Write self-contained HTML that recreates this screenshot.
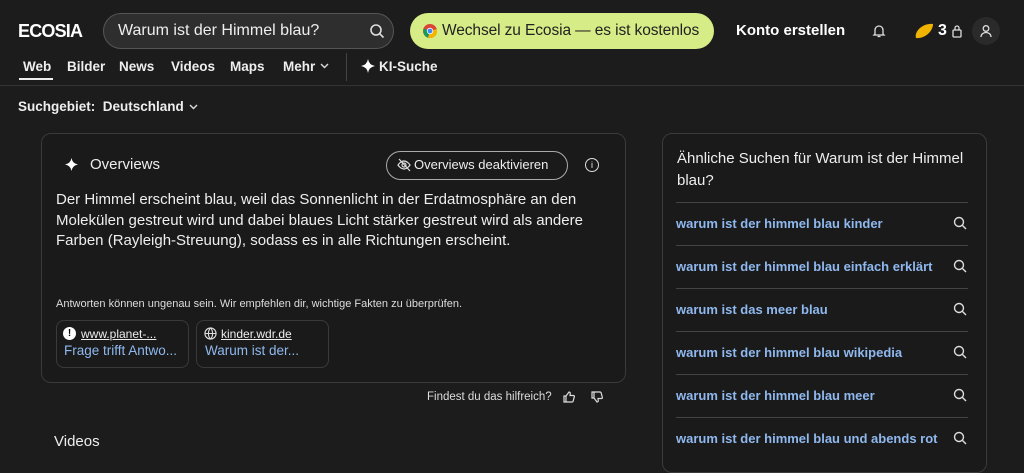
<!DOCTYPE html>
<html><head><meta charset="utf-8"><style>
*{box-sizing:border-box;margin:0;padding:0}
body{width:1024px;height:452px;overflow:hidden;background:#1c1c1c;color:#eee;font-family:"Liberation Sans",sans-serif;position:relative}
.a{position:absolute;white-space:nowrap}
.logo{left:18px;top:21px;font-weight:900;font-size:18px;letter-spacing:-0.8px;color:#fff}
.search{left:103px;top:13px;width:291px;height:36px;border:1px solid #555;border-radius:18px;background:#2e2e2e}
.green{left:410px;top:13px;width:304px;height:36px;border-radius:18px;background:#d6ec86;color:#222}
.nav{top:59px;font-size:13.5px;color:#eee;font-weight:bold}
.card{left:41px;top:133px;width:585px;height:250px;border:1px solid #3a3a3a;border-radius:10px;background:#1a1a1a}
.rc{left:662px;top:133px;width:325px;height:340px;border:1px solid #3a3a3a;border-radius:10px;background:#1a1a1a}
.rel{left:676px;width:292px;border-top:1px solid #444;height:43px;font-size:13px;font-weight:bold;color:#8fb8ef;padding-top:13px}
.src{top:320px;width:133px;height:48px;border:1px solid #3a3a3a;border-radius:8px}
</style></head><body>
<div class="a logo">ECOSIA</div>
<div class="a search"></div>
<div class="a" style="left:118px;top:22px;font-size:16px;color:#eee">Warum ist der Himmel blau?</div>
<svg class="a" style="left:369px;top:23px" width="16" height="16" viewBox="0 0 16 16" fill="none" stroke="#ddd" stroke-width="1.6"><circle cx="7" cy="7" r="5"/><path d="M11 11l3.5 3.5"/></svg>
<div class="a green"></div>
<svg class="a" style="left:423px;top:24px" width="14" height="14" viewBox="0 0 14 14"><circle cx="7" cy="7" r="7" fill="#db4437"/><path d="M7 7L1 4.5A7 7 0 0 0 5 13.7z" fill="#0f9d58"/><path d="M7 7l6.8-2A7 7 0 0 1 5 13.7z" fill="#f4b400"/><circle cx="7" cy="7" r="3.2" fill="#fff"/><circle cx="7" cy="7" r="2.4" fill="#4285f4"/></svg>
<div class="a" style="left:442px;top:22px;font-size:15.5px;color:#222;letter-spacing:-0.1px">Wechsel zu Ecosia — es ist kostenlos</div>
<div class="a" style="left:736px;top:22px;font-size:15px;color:#fff;font-weight:bold">Konto erstellen</div>
<svg class="a" style="left:872px;top:24px" width="14" height="14" viewBox="0 0 14 14" fill="none" stroke="#ddd" stroke-width="1.3"><path d="M3 10V6a4 4 0 0 1 8 0v4l1 1H2z M5.5 12.5h3"/></svg>
<svg class="a" style="left:914px;top:23px" width="20" height="16" viewBox="0 0 20 16"><path d="M2 15C0 9 8 0 19 1 19 8 11 16 2 15z" fill="#f0b400"/></svg>
<div class="a" style="left:938px;top:22px;font-size:16px;font-weight:bold;color:#fff">3</div>
<svg class="a" style="left:951px;top:24px" width="12" height="14" viewBox="0 0 12 14" fill="none" stroke="#ddd" stroke-width="1.3"><rect x="2" y="6" width="8" height="7" rx="1"/><path d="M4 6V4a2 2 0 0 1 4 0v2"/></svg>
<div class="a" style="left:972px;top:17px;width:28px;height:28px;border-radius:14px;background:#2a2a2a"></div>
<svg class="a" style="left:979px;top:24px" width="14" height="14" viewBox="0 0 14 14" fill="none" stroke="#ddd" stroke-width="1.3"><circle cx="7" cy="4.5" r="2.8"/><path d="M2 13c0-3 2.5-4.5 5-4.5s5 1.5 5 4.5"/></svg>
<div class="a nav" style="left:23px">Web</div>
<div class="a" style="left:19px;top:78px;width:34px;height:2px;background:#eee"></div>
<div class="a nav" style="left:67px">Bilder</div>
<div class="a nav" style="left:119px">News</div>
<div class="a nav" style="left:171px">Videos</div>
<div class="a nav" style="left:230px">Maps</div>
<div class="a nav" style="left:283px">Mehr</div>
<svg class="a" style="left:320px;top:63px" width="9" height="6" viewBox="0 0 9 6" fill="none" stroke="#ddd" stroke-width="1.4"><path d="M1 1l3.5 3.5L8 1"/></svg>
<div class="a" style="left:346px;top:53px;width:1px;height:28px;background:#444"></div>
<svg class="a" style="left:361px;top:59px" width="14" height="14" viewBox="0 0 14 14"><path d="M7 0Q8 6 14 7Q8 8 7 14Q6 8 0 7Q6 6 7 0z" fill="#fff"/></svg>
<div class="a nav" style="left:379px">KI-Suche</div>
<div class="a" style="left:0;top:85px;width:1024px;height:1px;background:#333"></div>
<div class="a" style="left:18px;top:99px;font-size:13.5px;font-weight:bold;color:#eee">Suchgebiet:&nbsp; Deutschland</div>
<svg class="a" style="left:189px;top:104px" width="9" height="6" viewBox="0 0 9 6" fill="none" stroke="#ddd" stroke-width="1.4"><path d="M1 1l3.5 3.5L8 1"/></svg>
<div class="a card"></div>
<svg class="a" style="left:65px;top:158px" width="13" height="13" viewBox="0 0 14 14"><path d="M7 0Q8 6 14 7Q8 8 7 14Q6 8 0 7Q6 6 7 0z" fill="#fff"/></svg>
<div class="a" style="left:90px;top:156px;font-size:15px;color:#eee">Overviews</div>
<div class="a" style="left:386px;top:151px;width:182px;height:29px;border:1px solid #aaa;border-radius:15px"></div>
<svg class="a" style="left:397px;top:158px" width="14" height="14" viewBox="0 0 14 14" fill="none" stroke="#ddd" stroke-width="1.2"><path d="M1 7s2.5-4 6-4 6 4 6 4-2.5 4-6 4-6-4-6-4z"/><circle cx="7" cy="7" r="2"/><path d="M2 1l11 12"/></svg>
<div class="a" style="left:414px;top:157px;font-size:13px;color:#eee">Overviews deaktivieren</div>
<div class="a" style="left:585px;top:158px;width:14px;height:14px;border:1.3px solid #ddd;border-radius:7px;font-size:9px;text-align:center;line-height:12px">i</div>
<div class="a" style="left:56px;top:190px;font-size:15px;line-height:20.5px;color:#eee;white-space:normal;width:560px">Der Himmel erscheint blau, weil das Sonnenlicht in der Erdatmosphäre an den Molekülen gestreut wird und dabei blaues Licht stärker gestreut wird als andere Farben (Rayleigh-Streuung), sodass es in alle Richtungen erscheint.</div>
<div class="a" style="left:56px;top:298px;font-size:11px;color:#ddd">Antworten können ungenau sein. Wir empfehlen dir, wichtige Fakten zu überprüfen.</div>
<div class="a src" style="left:56px"></div>
<div class="a src" style="left:196px"></div>
<div class="a" style="left:63px;top:327px;width:13px;height:13px;border-radius:7px;background:#fff;color:#000;font-size:10px;font-weight:bold;text-align:center;line-height:13px">!</div>
<div class="a" style="left:81px;top:327px;font-size:12px;color:#eee;text-decoration:underline">www.planet-...</div>
<div class="a" style="left:64px;top:343px;font-size:13.5px;color:#8fb8ef">Frage trifft Antwo...</div>
<svg class="a" style="left:204px;top:327px" width="13" height="13" viewBox="0 0 14 14" fill="none" stroke="#ddd" stroke-width="1.2"><circle cx="7" cy="7" r="6"/><path d="M1 7h12M7 1c-3 3-3 9 0 12M7 1c3 3 3 9 0 12"/></svg>
<div class="a" style="left:221px;top:327px;font-size:12px;color:#eee;text-decoration:underline">kinder.wdr.de</div>
<div class="a" style="left:205px;top:343px;font-size:13.5px;color:#8fb8ef">Warum ist der...</div>
<div class="a" style="left:427px;top:391px;font-size:11.5px;color:#ddd">Findest du das hilfreich?</div>
<svg class="a" style="left:563px;top:391px" width="12" height="12" viewBox="0 0 12 12" fill="none" stroke="#ddd" stroke-width="1.2"><path d="M1 5h2v6H1zM3 5l3-4c1 0 1.5.8 1.2 2L7 4.5h3.5c.8 0 1 .7.8 1.3L10 10.5c-.2.4-.5.5-1 .5H3"/></svg>
<svg class="a" style="left:591px;top:391px" width="12" height="12" viewBox="0 0 12 12" fill="none" stroke="#ddd" stroke-width="1.2"><path d="M1 1h2v6H1zM3 7l3 4c1 0 1.5-.8 1.2-2L7 7.5h3.5c.8 0 1-.7.8-1.3L10 1.5C9.8 1.1 9.5 1 9 1H3"/></svg>
<div class="a" style="left:54px;top:433px;font-size:15px;color:#eee">Videos</div>
<div class="a rc"></div>
<div class="a" style="left:677px;top:148px;font-size:15px;line-height:22px;color:#eee;white-space:normal;width:300px">Ähnliche Suchen für Warum ist der Himmel blau?</div>
<div class="a rel" style="top:202px">warum ist der himmel blau kinder</div>
<div class="a rel" style="top:245px">warum ist der himmel blau einfach erklärt</div>
<div class="a rel" style="top:288px">warum ist das meer blau</div>
<div class="a rel" style="top:331px">warum ist der himmel blau wikipedia</div>
<div class="a rel" style="top:374px">warum ist der himmel blau meer</div>
<div class="a rel" style="top:417px">warum ist der himmel blau und abends rot</div>
<svg class="a" style="left:953px;top:216px" width="15" height="230" viewBox="0 0 15 230" fill="none" stroke="#ddd" stroke-width="1.4">
<g id="q"><circle cx="6" cy="6" r="4.5"/><path d="M9.5 9.5l3.5 3.5"/></g>
<use href="#q" y="43"/><use href="#q" y="86"/><use href="#q" y="129"/><use href="#q" y="172"/><use href="#q" y="215"/></svg>
</body></html>
